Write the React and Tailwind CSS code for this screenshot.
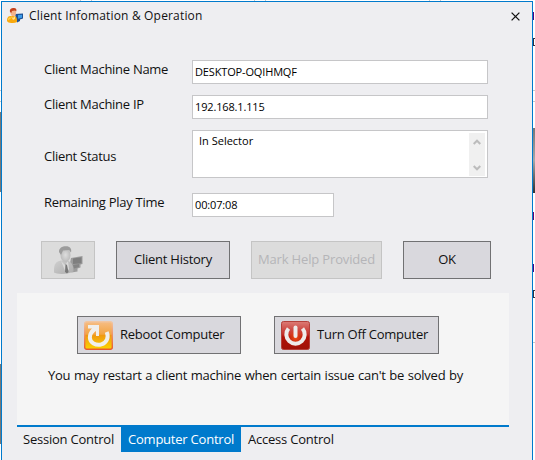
import React from "react";

const label = "flex items-center text-[13px] tracking-[-0.28px] whitespace-nowrap";
const field = "flex items-center border border-[#c6c6c8] bg-white text-[11px] tracking-[-0.15px] text-black whitespace-nowrap";
const button = "flex h-[38px] shrink-0 items-center justify-center border border-[#717173] bg-[#d9d8dd] text-[13px] tracking-[-0.25px] whitespace-nowrap";
const disabled = "flex h-[38px] shrink-0 items-center justify-center border border-[#c4c4c4] bg-[#dcdcdc] text-[13px] tracking-[-0.15px] text-[#b5b5b8] whitespace-nowrap";
const iconButton = "flex h-[38px] items-center gap-[7px] border border-[#717173] bg-[#d9d8dd] pl-[6px] text-[13px] tracking-[-0.25px] whitespace-nowrap";

function UserIcon({ className }) {
  return (
    <svg viewBox="0 0 16 15" className={className}>
      <path d="M8 6l8-.5v5l-3 1v1.500l-3 1.500-1-4z" fill="#1c4f94" />
      <path d="M11 7l4-.3v3l-4 1z" fill="#3d9be8" />
      <path d="M0 13c0-4 1.500-5 4-5h3c3 .5 3 3 3 6-3 1.500-9 1.500-10-1z" fill="#f8a90e" />
      <path d="M2 9.500c-1 1-1 2-1 3l4-3z" fill="#ffd34a" />
      <path d="M4 8l2 2 2-2v3l-2 1z" fill="#ffe08a" />
      <ellipse cx="6.300" cy="4.800" rx="2.800" ry="3.400" fill="#f4b48c" />
      <path d="M3 4c-.5-3 1-4 4-4 2 0 3 1.500 2.200 3.500L8 2.500 5 3l-.7 2z" fill="#c4431c" />
    </svg>
  );
}

function DisabledUserIcon() {
  return (
    <svg viewBox="0 0 29 28" className="h-[28px] w-[29px]">
      <defs>
        <linearGradient id="body" x1="0" y1="0" x2="1" y2="1">
          <stop offset="0" stopColor="#cfcfcf" />
          <stop offset="1" stopColor="#adadad" />
        </linearGradient>
        <radialGradient id="face">
          <stop offset="0" stopColor="#dddddd" />
          <stop offset="1" stopColor="#bcbcbc" />
        </radialGradient>
      </defs>
      <path d="M17 12l11.500-2v8l-2 .6v3l-3 1v3l-6 1-2-7z" fill="#9c9c9c" />
      <path d="M19 12.500l8.500-1.300v6L19 18z" fill="#7f7f7f" />
      <path d="M19 19l6-1v3l-5 1.500z" fill="#858585" />
      <path d="M0 24c0-6 2-8.500 7-9.500h6c4 1 6.500 4 6.500 11-5 3-17 3-19.500 1z" fill="url(#body)" />
      <path d="M7 15l4 4 3-4 1 8-3 4z" fill="#dadada" />
      <path d="M11.500 18l1.500 1 1.500 7-1.500 1.500-2-1.500z" fill="#777777" />
      <ellipse cx="11.500" cy="9" rx="5" ry="7" fill="url(#face)" />
      <path d="M5 6C5 2 8 .3 12 .3c4 0 6 2.700 5 6.200L15 4 9 4.500 7 9z" fill="#9c9c9c" />
    </svg>
  );
}

function RebootIcon() {
  return (
    <svg viewBox="0 0 29 29" className="mt-[1px] h-[29px] w-[29px] shrink-0">
      <defs>
        <linearGradient id="reboot" x1="0" y1="0" x2="0" y2="1">
          <stop offset="0" stopColor="#f6bd84" />
          <stop offset=".45" stopColor="#f3a544" />
          <stop offset=".5" stopColor="#f09a10" />
          <stop offset="1" stopColor="#fbd400" />
        </linearGradient>
        <linearGradient id="rebootEdge" x1="0" y1="0" x2="0" y2="1">
          <stop offset="0" stopColor="#f2c6a0" />
          <stop offset="1" stopColor="#e85a2c" />
        </linearGradient>
      </defs>
      <rect x=".7" y=".7" width="27.600" height="27.600" rx="2" fill="url(#reboot)" stroke="url(#rebootEdge)" strokeWidth="1.400" />
      <path d="M9 9.500C4.500 14 5 20 9.500 22.500c5 2.700 11.500 1 13.500-4 1-2.500.8-5-.3-7.500" fill="none" stroke="#f0efec" strokeWidth="4" />
      <path d="M4 4h11v11h-3V10L8.500 12.500 6 10.500 8 7.500H4z" fill="#f0efec" />
    </svg>
  );
}

function PowerIcon() {
  return (
    <svg viewBox="0 0 29 29" className="mt-[1px] h-[29px] w-[29px] shrink-0">
      <defs>
        <linearGradient id="power" x1="0" y1="0" x2="0" y2="1">
          <stop offset="0" stopColor="#dc7c76" />
          <stop offset=".45" stopColor="#c5302a" />
          <stop offset=".55" stopColor="#b01208" />
          <stop offset="1" stopColor="#a01208" />
        </linearGradient>
        <radialGradient id="powerGlow">
          <stop offset="0" stopColor="#ef4c16" />
          <stop offset="1" stopColor="#ef4c16" stopOpacity="0" />
        </radialGradient>
      </defs>
      <rect x=".5" y=".5" width="28" height="28" rx="2" fill="url(#power)" stroke="#b4403a" />
      <circle cx="14.500" cy="17" r="9" fill="url(#powerGlow)" />
      <path d="M7.500 7.500A9.200 9.200 0 1 0 21.500 7.500" fill="none" stroke="#eeebea" strokeWidth="4" />
      <path d="M14.500 6.500v8.500" stroke="#eeebea" strokeWidth="4" strokeLinecap="round" />
    </svg>
  );
}

function Background() {
  return (
    <div className="absolute inset-0 bg-white">
      <div className="absolute left-[80px] top-0 h-px w-3 border-x border-[#c8c8c8]" />
      <div className="absolute left-[254px] top-0 h-px w-3 border-x border-[#c8c8c8]" />
      <div className="absolute left-[429px] top-0 h-px w-3 border-x border-[#c8c8c8]" />
      <div className="absolute left-0 top-[90px] h-[12px] w-px border-y border-[#c8c8c8]" />
      <div className="absolute left-0 top-[112px] h-[80px] w-px bg-[#777777]" />
      <div className="absolute left-0 top-[364px] h-[80px] w-px bg-[#777777]" />
      <div className="absolute left-[533px] top-[12px] h-[8px] w-px bg-[#52007c]" />
      <div className="absolute left-[533px] top-[38px] h-[8px] w-[2px] border-y border-l border-[#303040]" />
      <div className="absolute left-[533px] top-[90px] h-[12px] w-[2px] border-y border-[#c8c8c8]" />
      <div className="absolute left-[533px] top-[128px] h-[65px] w-[2px] bg-gradient-to-b from-[#777777] via-[#a8a8a8] to-[#333333]" />
      <div className="absolute left-[533px] top-[212px] h-[8px] w-px bg-[#6b006b]" />
      <div className="absolute left-[533px] top-[264px] h-[8px] w-px bg-[#52007c]" />
      <div className="absolute left-[533px] top-[290px] h-[8px] w-[2px] border-y border-l border-[#303040]" />
      <div className="absolute left-[533px] top-[342px] h-px w-[2px] bg-[#c8c8c8]" />
    </div>
  );
}

export default function App() {
  return (
    <div className="relative h-[460px] w-[535px] overflow-hidden font-['Open_Sans','Noto_Sans',sans-serif] text-[#111111]">
      <Background />
      <main className="relative ml-px h-[460px] w-[532px] pt-px">
        <div className="h-[459px] border-x border-t border-[#007acc] bg-[#eeeef1]">
          <header className="flex h-[28px] items-center pl-[5px] pr-[12px]">
            <UserIcon className="-mt-px h-[15px] w-[16px]" />
            <h1 className="ml-[6px] text-[12px] tracking-[0.17px] whitespace-nowrap">Client Infomation &amp; Operation</h1>
            <svg viewBox="0 0 9 9" className="ml-auto h-[9px] w-[9px]"><path d="M.6.6l7.800 7.800M8.400.6L.6 8.400" stroke="#111" strokeWidth="1.300" /></svg>
          </header>

          <section className="ml-[42px] mt-[30px] grid w-[444px] grid-cols-[148px_296px] gap-y-[11px]">
            <label className={label}><span className="-mt-[4px]">Client Machine Name</span></label>
            <div className={field + " h-[24px] pl-[2px]"}>DESKTOP-OQIHMQF</div>
            <label className={label}><span className="-mt-[4px]">Client Machine IP</span></label>
            <div className={field + " h-[24px] pl-[2px]"}>192.168.1.115</div>
            <label className={label}><span className="mt-[5px]">Client Status</span></label>
            <div className="flex h-[48px] justify-between border border-[#c6c6c8] bg-white py-[2px] pl-[6px] pr-[2px] text-[11px] text-black">
              <span className="leading-[15px]">In Selector</span>
              <div className="flex h-[43px] w-[16px] flex-col items-center justify-between bg-[#f0f0f0] pb-[5px] pt-[6px]">
                <svg viewBox="0 0 8 6" className="h-[6px] w-[8px]"><path d="M.7 5L4 1.700 7.300 5" fill="none" stroke="#bcbcbc" strokeWidth="2" /></svg>
                <svg viewBox="0 0 8 6" className="h-[6px] w-[8px]"><path d="M.7 1L4 4.300 7.300 1" fill="none" stroke="#bcbcbc" strokeWidth="2" /></svg>
              </div>
            </div>
          </section>
          <section className="ml-[42px] mt-[15px] grid w-[290px] grid-cols-[148px_142px]">
            <label className={label}><span className="-mt-[4px]">Remaining Play Time</span></label>
            <div className={field + " h-[24px] pl-[2px]"}>00:07:08</div>
          </section>

          <section className="ml-[39px] mt-[24px] flex gap-[21px]">
            <button className={disabled + " w-[54px]"}><DisabledUserIcon /></button>
            <button className={button + " w-[114px]"}>Client History</button>
            <button className={disabled + " w-[131px]"}>Mark Help Provided</button>
            <button className={button + " w-[88px]"}>OK</button>
          </section>

          <section className="ml-[15px] mt-[14px] h-[134px] w-[492px] border-b-2 border-[#007acc] bg-[#f5f5f5] pt-[23px]">
            <div className="flex gap-[33px] pl-[60px]">
              <button className={iconButton + " w-[164px]"}><RebootIcon /><span>Reboot Computer</span></button>
              <button className={iconButton + " w-[165px]"}><PowerIcon /><span>Turn Off Computer</span></button>
            </div>
            <p className="ml-[31px] mt-[11px] text-[13px] leading-[20px] tracking-[-0.24px] [word-spacing:0.5px] whitespace-nowrap">You may restart a client machine when certain issue can't be solved by</p>
          </section>
          <nav className="ml-[15px] flex h-[25px] text-[13px] leading-[24px] tracking-[-0.22px] whitespace-nowrap">
            <div className="w-[104px] pl-[6px]">Session Control</div>
            <div className="w-[120px] bg-[#007acc] pl-[7px] text-white">Computer Control</div>
            <div className="pl-[7px]">Access Control</div>
          </nav>
        </div>
      </main>
    </div>
  );
}
